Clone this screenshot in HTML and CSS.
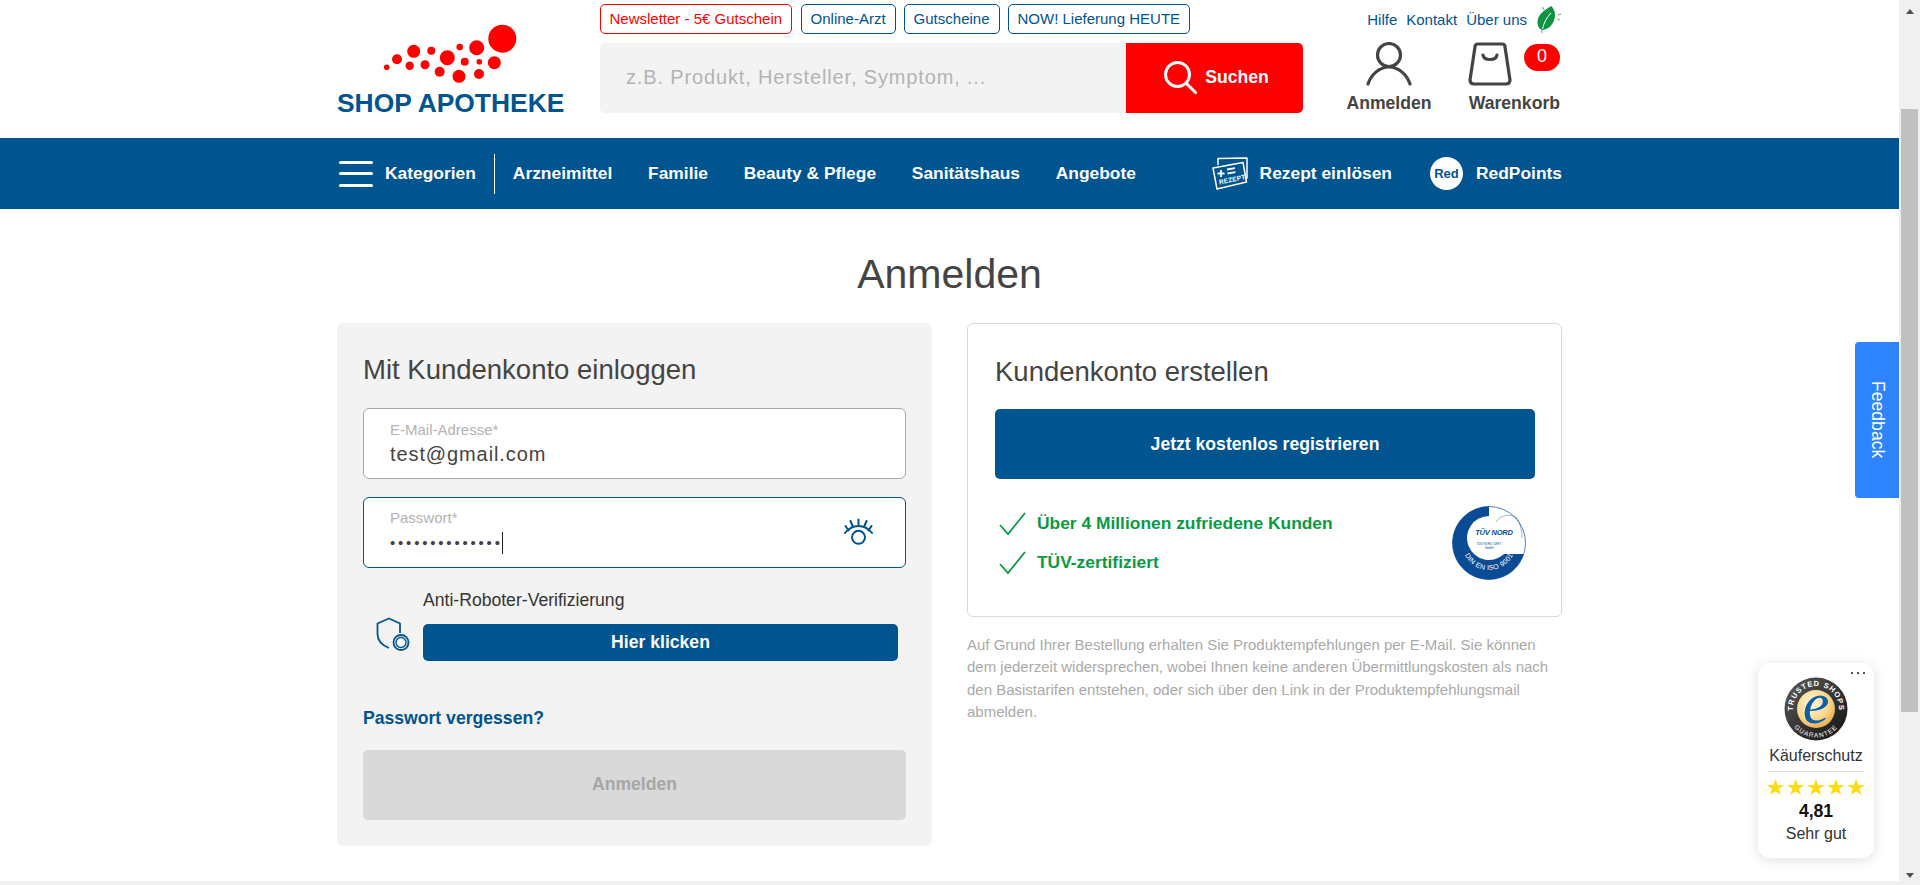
FILE: index.html
```html
<!DOCTYPE html>
<html lang="de">
<head>
<meta charset="utf-8">
<title>Anmelden - Shop Apotheke</title>
<link rel="stylesheet" href="styles.css">
</head>
<body>
<div class="window">
  <div class="page">
    <header class="header">
      <div class="wrap header-row">
        <a class="logo">
          <svg class="logo-dots" viewBox="0 0 240 91" width="240" height="91">
            <g fill="#f00">
              <circle cx="165.300" cy="38.700" r="14"/><circle cx="139.700" cy="47.700" r="7.500"/><circle cx="122.700" cy="47" r="3.300"/>
              <circle cx="157.300" cy="62.700" r="6.500"/><circle cx="142.300" cy="61.700" r="2.800"/><circle cx="142" cy="74" r="5"/>
              <circle cx="127.700" cy="61.700" r="4"/><circle cx="110.300" cy="57.700" r="7.500"/><circle cx="94.300" cy="50.700" r="4"/>
              <circle cx="76.700" cy="51.300" r="6.500"/><circle cx="122" cy="76.300" r="6.500"/><circle cx="102.700" cy="71.700" r="5"/>
              <circle cx="88" cy="64.700" r="4.500"/><circle cx="72.700" cy="65.700" r="4.200"/><circle cx="60" cy="59.300" r="5"/><circle cx="49.700" cy="67.300" r="2.800"/>
            </g>
          </svg>
          <span class="logo-text">SHOP APOTHEKE</span>
        </a>
        <div class="header-mid">
          <div class="tags">
            <a class="tag tag-red">Newsletter - 5€ Gutschein</a>
            <a class="tag">Online-Arzt</a>
            <a class="tag">Gutscheine</a>
            <a class="tag">NOW! Lieferung HEUTE</a>
          </div>
          <div class="search">
            <div class="search-field">z.B. Produkt, Hersteller, Symptom, ...</div>
            <button class="search-btn">
              <svg viewBox="0 0 34 34" width="34" height="34" fill="none" stroke="#fff" stroke-width="3"><circle cx="14.500" cy="14.500" r="12"/><path d="M23.500 23.500l9 9" stroke-linecap="round"/></svg>
              <span>Suchen</span>
            </button>
          </div>
        </div>
        <div class="header-right">
          <div class="meta">
            <a>Hilfe</a><a>Kontakt</a><a>Über uns</a>
            <svg class="leaf" viewBox="5 4 28 31" width="28" height="31">
              <path d="M21.500 6C14 10 7.500 15 7.500 22c0 5 2.500 8 5.500 8 7-1 12-8 12-15 0-4-2-7-3.500-9z" fill="#0c9441"/>
              <path d="M12.500 29C14 22 17 17 21 13" stroke="#fff" fill="none" stroke-width="1"/>
              <path d="M12.500 7l1.500 3M28 15l3-1M27.500 19l2.500 1M12 30v3" stroke="#5dbb80" fill="none" stroke-width="1.100"/>
            </svg>
          </div>
          <div class="account">
            <a class="acc-item acc-login">
              <svg viewBox="0 0 46 44" width="46" height="44" fill="none" stroke="#444" stroke-width="3.200" stroke-linecap="round"><circle cx="23" cy="13" r="11.500"/><path d="M2 42c3-9 11-17 21-17s18 8 21 17"/></svg>
              <span>Anmelden</span>
            </a>
            <a class="acc-item acc-cart">
              <span class="cart-icon">
                <svg viewBox="0 0 44 44" width="44" height="44" fill="none" stroke="#444" stroke-width="3.200" stroke-linecap="round" stroke-linejoin="round"><path d="M10 2h24c2 0 3 1 3 3l5 33c0 2-1 4-4 4H6c-3 0-4-2-4-4L7 5c0-2 1-3 3-3z"/><path d="M15 13c1 6 13 6 14 0"/></svg>
                <span class="badge">0</span>
              </span>
              <span>Warenkorb</span>
            </a>
          </div>
        </div>
      </div>
    </header>

    <nav class="nav">
      <div class="wrap nav-row">
        <a class="nav-cat">
          <span class="burger"><i></i><i></i><i></i></span>
          <span>Kategorien</span>
        </a>
        <a class="nav-link nav-first">Arzneimittel</a>
        <a class="nav-link">Familie</a>
        <a class="nav-link">Beauty &amp; Pflege</a>
        <a class="nav-link">Sanitätshaus</a>
        <a class="nav-link">Angebote</a>
        <a class="nav-link nav-rezept">
          <svg viewBox="0 0 36 34" width="36" height="34" fill="none" stroke="#fff" stroke-width="1.500" stroke-linejoin="round"><path d="M6 8V1.500L35 1v20h-3"/><path d="M1 11L31 5.500l3.500 19.500L5 32z" fill="#00548f"/><path d="M5.500 16.500h7M9 13v7M15 12.500l8-1.300M15.500 16.500l8-1.300" stroke-width="1.800"/><text x="7.500" y="27.500" class="rezept-text" transform="rotate(-12 7.500 27.500)">REZEPT</text></svg>
          <span>Rezept einlösen</span>
        </a>
        <a class="nav-link nav-red">
          <span class="red-dot">Red</span>
          <span>RedPoints</span>
        </a>
      </div>
    </nav>

    <main class="wrap main">
      <h1 class="title">Anmelden</h1>
      <div class="cols">
        <section class="panel-login">
          <h2 class="h2">Mit Kundenkonto einloggen</h2>
          <div class="field">
            <label>E-Mail-Adresse*</label>
            <div class="value">test@gmail.com</div>
          </div>
          <div class="field field-focus">
            <label>Passwort*</label>
            <div class="value value-pass"><span>••••••••••••••</span><i class="caret"></i></div>
            <svg class="eye" viewBox="0 0 30 28" width="30" height="28" fill="none" stroke="#00548f" stroke-width="2" stroke-linecap="round"><circle cx="14.500" cy="19.300" r="6.500"/><path d="M1 15C5 10 10 8 14.500 8S24 10 28 15M14.500 1.500v5.500M6.500 3l2.500 6M22.500 3L20 9M1.500 8l3 4.500M27.500 8l-3 4.500"/></svg>
          </div>
          <div class="captcha">
            <svg class="shield" viewBox="0 0 36 36" width="36" height="36" fill="none" stroke="#00548f" stroke-width="1.800" stroke-linejoin="round"><path d="M25 16V6.500L14 1.500 2.500 6.500V17c0 6 4 11 11.500 14"/><circle cx="26" cy="25.500" r="7.500" fill="#f3f3f3"/><circle cx="26" cy="25.500" r="5" fill="#fff" stroke-width="1.400"/></svg>
            <div class="captcha-body">
              <div class="captcha-label">Anti-Roboter-Verifizierung</div>
              <button class="captcha-btn">Hier klicken</button>
            </div>
          </div>
          <a class="forgot">Passwort vergessen?</a>
          <button class="submit">Anmelden</button>
        </section>

        <section class="right">
          <div class="panel-register">
            <h2 class="h2">Kundenkonto erstellen</h2>
            <button class="register">Jetzt kostenlos registrieren</button>
            <div class="benefits">
              <ul class="checks">
                <li><svg viewBox="0 0 28 24" width="28" height="24" fill="none" stroke="#0a9a43" stroke-width="1.800"><path d="M1 13l8 9L26 1"/></svg>Über 4 Millionen zufriedene Kunden</li>
                <li><svg viewBox="0 0 28 24" width="28" height="24" fill="none" stroke="#0a9a43" stroke-width="1.800"><path d="M1 13l8 9L26 1"/></svg>TÜV-zertifiziert</li>
              </ul>
              <svg class="tuv" viewBox="0 0 74 74" width="74" height="74">
                <defs><path id="tuvArc" d="M10 37a27 27 0 0 0 54 0"/></defs>
                <circle cx="37" cy="37" r="36.500" fill="none" stroke="#0a4b96" stroke-width=".7"/>
                <path d="M37 .5A36.500 36.500 0 1 0 71.800 48H52.100A22 22 0 1 1 37 10z" fill="#0a4b96"/>
                <path d="M44 16C48 9 58 7 65 12c3 5 5 12 5 20" fill="none" stroke="#0a4b96" stroke-width=".4"/>
                <text x="42" y="29" class="tuv-brand">TÜV NORD</text>
                <text x="37" y="39" class="tuv-small">TÜV NORD CERT</text>
                <text x="37" y="43" class="tuv-small">GmbH</text>
                <text class="tuv-arc"><textPath href="#tuvArc" startOffset="50%">DIN EN ISO 9001</textPath></text>
              </svg>
            </div>
          </div>
          <p class="note">Auf Grund Ihrer Bestellung erhalten Sie Produktempfehlungen per E-Mail. Sie können dem jederzeit widersprechen, wobei Ihnen keine anderen Übermittlungskosten als nach den Basistarifen entstehen, oder sich über den Link in der Produktempfehlungsmail abmelden.</p>
        </section>
      </div>
    </main>
    <div class="foot-strip"></div>
  </div>

  <div class="scrollbar">
    <span class="arrow arrow-up"></span>
    <div class="track"><div class="thumb"></div></div>
    <span class="arrow arrow-down"></span>
  </div>

  <a class="feedback"><span>Feedback</span></a>

  <aside class="trust">
    <span class="trust-more"><i></i><i></i><i></i></span>
    <svg class="trust-seal" viewBox="0 0 64 64" width="64" height="64">
      <defs>
        <radialGradient id="sealGold" cx="40%" cy="35%" r="70%"><stop offset="0" stop-color="#fff6df"/><stop offset=".6" stop-color="#fbd88f"/><stop offset="1" stop-color="#e9a94a"/></radialGradient>
        <linearGradient id="sealDark" x1="0" y1="0" x2="1" y2="1"><stop offset="0" stop-color="#5b5b5b"/><stop offset="1" stop-color="#111"/></linearGradient>
        <path id="sealTop" d="M32 55a23 23 0 1 1 0-46a23 23 0 1 1 0 46"/>
        <path id="sealBot" d="M32 3.500a28.500 28.500 0 1 0 0 57a28.500 28.500 0 1 0 0-57"/>
      </defs>
      <circle cx="32" cy="32" r="31.500" fill="url(#sealDark)"/>
      <circle cx="32" cy="32" r="19" fill="url(#sealGold)"/>
      <text class="seal-top"><textPath href="#sealTop" startOffset="50%">TRUSTED SHOPS</textPath></text>
      <text class="seal-bot"><textPath href="#sealBot" startOffset="50%">GUARANTEE</textPath></text>
      <text x="32" y="46" class="seal-e">e</text>
    </svg>
    <div class="trust-name">Käuferschutz</div>
    <div class="trust-stars">★★★★★</div>
    <div class="trust-score">4,81</div>
    <div class="trust-grade">Sehr gut</div>
  </aside>
</div>
</body>
</html>
```

FILE: styles.css
```css
* { box-sizing: border-box; }
html, body { margin: 0; height: 885px; overflow: hidden; background: #fff; }
body { font-family: "Liberation Sans", Arial, sans-serif; color: #444; }
a { color: inherit; text-decoration: none; }
button { font-family: inherit; border: 0; cursor: pointer; }
h1, h2, p, ul { margin: 0; padding: 0; }

.window { position: relative; display: flex; height: 885px; overflow: hidden; }
.page { flex: 1; min-width: 0; display: flex; flex-direction: column; height: 885px; }
.wrap { width: 1225px; margin: 0 auto; }

/* header */
.header { height: 138px; flex: none; }
.header-row { display: flex; height: 138px; }
.logo { width: 263px; flex: none; display: flex; flex-direction: column; }
.logo-dots { display: block; height: 91px; flex: none; }
.logo-text { font-size: 26.400px; line-height: 24px; font-weight: 700; color: #00548f; white-space: nowrap; }
.header-mid { width: 703px; flex: none; padding-top: 4px; }
.tags { display: flex; gap: 8px; }
.tag { height: 30px; line-height: 27px; padding: 0 9px; border: 1px solid #00548f; border-radius: 5px; color: #00548f; font-size: 15px; white-space: nowrap; }
.tag-red { border-color: #f00; color: #f00; padding: 0 8.500px; margin-right: 1px; }
.search { display: flex; height: 70px; margin-top: 9px; border-radius: 5px; overflow: hidden; }
.search-field { flex: 1; background: #f3f3f3; padding-left: 26px; line-height: 68px; font-size: 20px; letter-spacing: .85px; color: #b3b3b3; }
.search-btn { width: 177px; background: #f00; color: #fff; font-size: 17.600px; font-weight: 700; display: flex; align-items: center; justify-content: center; gap: 8px; padding: 0 0 2px 3px; }
.header-right { flex: 1; display: flex; flex-direction: column; padding-top: 5px; }
.meta { display: flex; justify-content: flex-end; align-items: center; gap: 9px; font-size: 15px; color: #00548f; height: 28px; }
.leaf { margin: 0 -1px 0 -1px; flex: none; }
.account { display: flex; margin-top: 9px; justify-content: flex-end; margin-right: 2px; }
.acc-item { display: flex; flex-direction: column; align-items: center; font-size: 17.600px; font-weight: 700; color: #444; white-space: nowrap; }
.acc-login { width: 86px; margin-right: 36px; }
.acc-login svg { display: block; height: 44px; }
.acc-item > span:last-child { margin-top: 7px; line-height: 20px; }
.acc-cart { width: 92px; align-items: flex-end; }
.cart-icon { position: relative; display: block; width: 92px; height: 44px; }
.cart-icon svg { display: block; }
.badge { position: absolute; right: 0; top: 2px; width: 36px; height: 27px; border-radius: 14px; background: #f00; color: #fff; font-size: 18px; font-weight: 400; line-height: 24px; text-align: center; }

/* nav */
.nav { background: #00548f; height: 71px; flex: none; color: #fff; }
.nav-row { display: flex; align-items: center; height: 71px; font-size: 17.400px; font-weight: 700; }
.nav-cat { display: flex; align-items: center; gap: 12px; height: 40px; padding-right: 18px; padding-left: 2px; border-right: 1px solid #fff; }
.burger { display: flex; flex-direction: column; gap: 8.500px; width: 34px; }
.burger i { display: block; height: 3px; background: #fff; border-radius: 1.500px; }
.nav-link { margin-left: 35.700px; white-space: nowrap; display: flex; align-items: center; }
.nav-first { margin-left: 18px; }
.nav-rezept { margin-left: auto; gap: 12px; }
.nav-red { margin-left: 38px; gap: 13px; }
.rezept-text { font-size: 6.500px; font-weight: 700; fill: #fff; stroke: none; letter-spacing: .2px; }
.red-dot { width: 33px; height: 33px; border-radius: 50%; background: #fff; color: #00548f; font-size: 13px; line-height: 33px; text-align: center; }

/* main */
.main { flex: 1; }
.title { font-size: 41px; font-weight: 400; line-height: 46px; text-align: center; margin-top: 42px; color: #444; }
.cols { display: grid; grid-template-columns: 595px 595px; gap: 35px; margin-top: 26px; align-items: start; }
.h2 { font-size: 27.500px; font-weight: 400; line-height: 30px; color: #444; }
.panel-login { background: #f3f3f3; border-radius: 6px; height: 523px; padding: 32px 26px 0; }
.field { position: relative; height: 71px; margin-top: 23px; background: #fff; border: 1px solid #aaa; border-radius: 6px; padding: 13px 26px 0; }
.field + .field { margin-top: 18px; }
.field-focus { border-color: #00548f; padding-top: 12px; }
.field label { display: block; font-size: 15px; line-height: 16px; color: #b3b3b3; }
.value { font-size: 20px; line-height: 24px; letter-spacing: .9px; color: #444; margin-top: 4px; }
.value-pass { display: flex; align-items: center; font-size: 15px; letter-spacing: 2.800px; margin-top: 5px; }
.caret { display: block; width: 1px; height: 22px; background: #222; margin-left: -1px; }
.eye { position: absolute; right: 31px; top: 20px; }
.captcha { display: flex; align-items: flex-end; margin-top: 21px; padding: 0 8px 0 12px; }
.shield { margin-right: 12px; margin-bottom: 8px; flex: none; }
.captcha-body { flex: 1; }
.captcha-label { font-size: 17.600px; line-height: 22px; color: #333; }
.captcha-btn { display: block; width: 100%; height: 37px; margin-top: 13px; border-radius: 5px; background: #00548f; color: #fff; font-size: 17.600px; font-weight: 700; }
.forgot { display: block; margin-top: 47px; font-size: 17.600px; font-weight: 700; line-height: 20px; color: #00548f; }
.submit { display: block; width: 100%; height: 70px; margin-top: 22px; padding-bottom: 3px; background: #d9d9d9; border-radius: 5px; color: #a6a6a6; font-size: 17.600px; font-weight: 700; }
.panel-register { border: 1px solid #d9d9d9; border-radius: 6px; height: 294px; padding: 33px 26px 0 27px; }
.register { display: block; width: 100%; height: 70px; margin-top: 22px; background: #00548f; border-radius: 5px; color: #fff; font-size: 17.600px; font-weight: 700; }
.benefits { display: flex; justify-content: space-between; margin-top: 27px; padding-right: 9px; }
.checks { list-style: none; margin-top: -2px; padding-left: 4px; }
.checks li { display: flex; align-items: center; gap: 10px; height: 39px; font-size: 17.400px; font-weight: 700; color: #0a9a43; }
.tuv { display: block; }
.tuv-brand { font-size: 7.500px; font-weight: 700; font-style: italic; text-anchor: middle; fill: #0a4b96; letter-spacing: -.2px; }
.tuv-small { font-size: 3px; text-anchor: middle; fill: #0a4b96; }
.tuv-arc { font-size: 7px; fill: #fff; text-anchor: middle; letter-spacing: .3px; }
.note { font-size: 15px; line-height: 22.400px; color: #aaa; margin-top: 17px; }
.foot-strip { height: 4px; flex: none; background: #f0f0f0; }

/* scrollbar */
.scrollbar { width: 21px; flex: none; background: #f0f0f0; display: flex; flex-direction: column; align-items: center; height: 885px; }
.track { flex: 1; width: 100%; padding: 88px 2px 0; }
.thumb { height: 603px; background: #c0c0c0; }
.arrow { display: block; width: 0; height: 0; border-left: 4.500px solid transparent; border-right: 4.500px solid transparent; flex: none; }
.arrow-up { border-bottom: 5px solid #505050; margin-top: 9px; margin-bottom: 7px; }
.arrow-down { border-top: 5px solid #505050; margin-bottom: 7px; margin-top: 7px; }

/* floating */
.feedback { position: absolute; left: 1855px; top: 342px; width: 44px; height: 156px; background: #2e83ff; border-radius: 4px 0 0 4px; color: #fff; font-size: 17.600px; display: flex; align-items: center; justify-content: center; }
.feedback span { writing-mode: vertical-rl; }
.trust { position: absolute; left: 1758px; top: 663px; width: 116px; height: 195px; background: #fff; border-radius: 12px; box-shadow: 0 2px 14px rgba(0,0,0,.12); display: flex; flex-direction: column; align-items: center; padding-top: 14px; }
.trust-more { position: absolute; right: 9px; top: 9px; display: flex; gap: 4px; }
.trust-more i { display: block; width: 2px; height: 2px; background: #555; }
.trust-seal { display: block; flex: none; }
.seal-top, .seal-bot { font-size: 7.500px; font-weight: 700; fill: #fff; text-anchor: middle; letter-spacing: .9px; }
.seal-bot { font-size: 6.500px; font-weight: 400; letter-spacing: 1px; }
.seal-e { font-family: "Liberation Serif", serif; font-size: 60px; font-style: italic; fill: #0b5ea8; text-anchor: middle; }
.trust-name { font-size: 16px; line-height: 20px; margin-top: 5px; padding-bottom: 5px; border-bottom: 1px solid #ddd; width: 96px; text-align: center; color: #333; white-space: nowrap; }
.trust-stars { font-size: 22.500px; line-height: 22px; color: #ffdc0f; margin-top: 4px; white-space: nowrap; font-family: "DejaVu Sans", sans-serif; }
.trust-score { font-size: 17.600px; font-weight: 700; color: #111; line-height: 20px; margin-top: 3px; }
.trust-grade { font-size: 16px; color: #333; line-height: 18px; margin-top: 4px; }
```
